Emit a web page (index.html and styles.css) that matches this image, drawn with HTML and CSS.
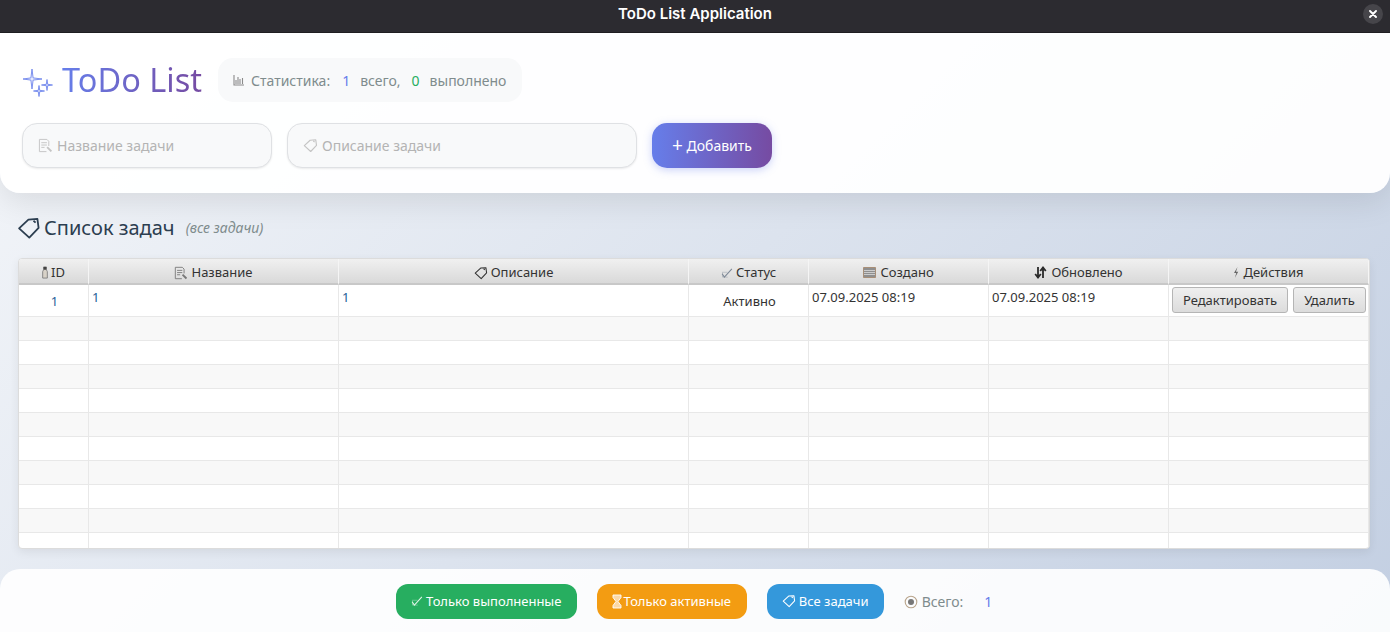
FILE: index.html
```html
<!DOCTYPE html>
<html lang="ru">
<head>
<meta charset="utf-8">
<title>ToDo List Application</title>
<link rel="stylesheet" href="styles.css">
</head>
<body>
<svg class="defs" width="0" height="0" aria-hidden="true">
  <symbol id="i-tag" viewBox="0 0 16 16"><path d="M1.400 8.200 7.600 2.400 13.600 1.900 14.400 7.900 8.200 14.400Z M11 3.200l1.400 1.200" fill="none" stroke="currentColor" stroke-width="1.200" stroke-linejoin="round"/></symbol>
  <symbol id="i-memo" viewBox="0 0 16 16"><path d="M1.500 1.500h8l2 2v5M1.500 1.500v13h7.500M3.500 5h6M3.500 7.500h6M3.500 10h3.500" fill="none" stroke="currentColor" stroke-width="1"/><path d="M9 10.500 10.500 9 15 13.500 13.500 15Z" fill="currentColor"/></symbol>
  <symbol id="i-check" viewBox="0 0 16 16"><path d="M1.500 9 4.500 13.500 14.500 2.500" fill="none" stroke="currentColor" stroke-width="1.400"/><path d="M1.500 7h7M2 7.500V13.500H9" fill="none" stroke="currentColor" stroke-width=".8" opacity=".6"/></symbol>
</svg>
<header class="titlebar">
  <span class="titlebar-text">ToDo List Application</span>
  <button class="close" aria-label="Закрыть"><svg width="8" height="8" viewBox="0 0 8 8"><path d="M1 1l6 6M7 1 1 7" stroke="#fff" stroke-width="1.900" stroke-linecap="round"/></svg></button>
</header>
<section class="top">
  <div class="brand">
    <svg class="sparkle" width="32" height="30" viewBox="0 0 32 30"><path d="M10 1 11.100 9.900 20 11 11.100 12.100 10 21 8.900 12.100 1 11 8.900 9.900Z M25 11.500 25.700 16.300 30.500 17 25.700 17.700 25 22.500 24.300 17.700 19.500 17 24.300 16.300Z M17 17.500 17.700 22.300 22.500 23 17.700 23.700 17 28.500 16.300 23.700 11.500 23 16.300 22.300Z" fill="#e6eafd" stroke="#6f86ec" stroke-width=".9" stroke-linejoin="round"/></svg>
    <h1 class="brand-title">ToDo List</h1>
    <div class="stats">
      <svg class="stat-icon" width="12" height="12" viewBox="0 0 12 12"><path d="M1 1v10h10M3 10V6M5 10V3M7 10V5M9.500 10V4" fill="none" stroke="currentColor" stroke-width="1.100"/></svg>
      <span class="stat-label">Статистика:</span>
      <span class="num-blue">1</span>
      <span>всего,</span>
      <span class="num-green">0</span>
      <span>выполнено</span>
    </div>
  </div>
  <form class="add-form">
    <label class="field field-name"><svg class="ph-icon"><use href="#i-memo"/></svg><input placeholder="Название задачи"></label>
    <label class="field field-desc"><svg class="ph-icon"><use href="#i-tag"/></svg><input placeholder="Описание задачи"></label>
    <button type="button" class="add-btn"><span class="plus">+</span> Добавить</button>
  </form>
</section>
<main class="content">
  <h2 class="list-title"><svg class="list-icon"><use href="#i-tag"/></svg>Список задач<em class="filter-note">(все задачи)</em></h2>
  <div class="table-wrap">
    <table class="tasks">
      <colgroup><col class="c-id"><col class="c-name"><col class="c-desc"><col class="c-status"><col class="c-date"><col class="c-date"><col class="c-act"></colgroup>
      <thead>
        <tr>
          <th><svg class="th-icon narrow" viewBox="0 0 6 14"><path d="M1.500 1h3v3l1 2v7H.5V6l1-2Z" fill="#d8d2c8" stroke="#777" stroke-width=".9"/><path d="M1.500 1h3v3h-3Z" fill="#444"/></svg>ID</th>
          <th><svg class="th-icon wide"><use href="#i-memo"/></svg>Название</th>
          <th><svg class="th-icon wide dark"><use href="#i-tag"/></svg>Описание</th>
          <th><svg class="th-icon check"><use href="#i-check"/></svg>Статус</th>
          <th><svg class="th-icon" viewBox="0 0 13 13"><path d="M.5 1.500h12v10H.5Z" fill="#8f8f8f" stroke="#a88f78"/><path d="M1 4.500h11M1 6.500h11M1 8.500h11" stroke="#dcdcdc" stroke-width=".8"/></svg>Создано</th>
          <th><svg class="th-icon" viewBox="0 0 13 13"><path d="M4 1v10M1.200 8 4 11.500 6.800 8M9 12V2.500M6.200 5 9 1.500 11.800 5" fill="none" stroke="#2b2b2b" stroke-width="1.800"/></svg>Обновлено</th>
          <th><svg class="th-icon bolt" viewBox="0 0 6 13"><path d="M4.500 1 1 7h2.300L1.800 12 5.200 5.800H3Z" fill="#666"/></svg>Действия</th>
        </tr>
      </thead>
      <tbody>
        <tr class="row-first">
          <td class="center mid blue">1</td>
          <td class="blue">1</td>
          <td class="blue">1</td>
          <td class="center mid">Активно</td>
          <td>07.09.2025 08:19</td>
          <td>07.09.2025 08:19</td>
          <td class="actions"><div class="action-row"><button class="act edit">Редактировать</button><button class="act del">Удалить</button></div></td>
        </tr>
        <tr class="alt"><td></td><td></td><td></td><td></td><td></td><td></td><td></td></tr>
        <tr><td></td><td></td><td></td><td></td><td></td><td></td><td></td></tr>
        <tr class="alt"><td></td><td></td><td></td><td></td><td></td><td></td><td></td></tr>
        <tr><td></td><td></td><td></td><td></td><td></td><td></td><td></td></tr>
        <tr class="alt"><td></td><td></td><td></td><td></td><td></td><td></td><td></td></tr>
        <tr><td></td><td></td><td></td><td></td><td></td><td></td><td></td></tr>
        <tr class="alt"><td></td><td></td><td></td><td></td><td></td><td></td><td></td></tr>
        <tr><td></td><td></td><td></td><td></td><td></td><td></td><td></td></tr>
        <tr class="alt"><td></td><td></td><td></td><td></td><td></td><td></td><td></td></tr>
        <tr><td></td><td></td><td></td><td></td><td></td><td></td><td></td></tr>
      </tbody>
    </table>
  </div>
</main>
<footer class="bottom">
  <button class="pill green"><svg class="pill-icon"><use href="#i-check"/></svg>Только выполненные</button>
  <button class="pill orange"><svg class="pill-icon hour" viewBox="0 0 10 15"><path d="M1 1h8v2.500L6 7.500l3 4V14H1v-2.500l3-4L1 3.500Z" fill="#fbd9a8" stroke="#fff" stroke-width=".9"/></svg>Только активные</button>
  <button class="pill blue-pill"><svg class="pill-icon tag"><use href="#i-tag"/></svg>Все задачи</button>
  <div class="total">
    <svg class="total-icon" width="14" height="14" viewBox="0 0 14 14"><circle cx="7" cy="7" r="5.800" fill="none" stroke="#b9a58c" stroke-width="1.100"/><circle cx="7" cy="7" r="3" fill="#777"/></svg>
    <span>Всего:</span>
    <span class="num-blue total-num">1</span>
  </div>
</footer>
</body>
</html>
```
FILE: styles.css
```css
* { box-sizing: border-box; }
html, body { height: 100%; }
body {
  margin: 0;
  width: 1390px;
  height: 632px;
  overflow: hidden;
  display: flex;
  flex-direction: column;
  font-family: "Noto Sans", "Open Sans", sans-serif;
  font-size: 13px;
  color: #2c3e50;
  background: linear-gradient(135deg, #f5f7fa 0%, #c3cfe2 100%);
}
.defs { position: absolute; }
button { font-family: inherit; }

.titlebar {
  position: relative;
  flex: 0 0 33px;
  display: flex;
  align-items: center;
  justify-content: center;
  padding-bottom: 5px;
  background: #2c2b30;
  border-bottom: 1px solid #1f1e22;
}
.titlebar-text {
  font-family: Inter, sans-serif;
  font-weight: 600;
  font-size: 15px;
  color: #fff;
}
.close {
  position: absolute;
  right: 7px;
  top: 4px;
  width: 20px;
  height: 20px;
  padding: 0;
  border: 0;
  border-radius: 50%;
  background: #46454a;
  display: flex;
  align-items: center;
  justify-content: center;
}

.top {
  flex: 0 0 160px;
  padding: 25px 22px 0;
  border-radius: 0 0 20px 20px;
  background: rgba(255, 255, 255, .95);
  box-shadow: 0 8px 32px rgba(0, 0, 0, .1);
}
.brand { display: flex; align-items: center; height: 44px; }
.sparkle { margin-top: 6px; flex: none; }
.brand-title {
  margin: 0 0 0 8px;
  font-size: 32.5px;
  font-weight: 400;
  line-height: 44px;
  background: linear-gradient(90deg, #667eea, #764ba2);
  -webkit-background-clip: text;
  background-clip: text;
  color: transparent;
}
.stats {
  margin-left: 16px;
  width: 304px;
  height: 44px;
  padding: 0 15px;
  display: flex;
  align-items: center;
  border-radius: 15px;
  background: #f8f9fa;
  color: #7f8c8d;
  font-size: 14px;
}
.stat-icon { color: #8a8a8a; margin-right: 6px; flex: none; }
.num-blue { color: #667eea; margin: 0 10px 0 12px; }
.num-green { color: #27ae60; margin: 0 10px 0 11px; }

.add-form { display: flex; gap: 15px; margin-top: 21px; }
.field {
  height: 45px;
  padding: 0 15px;
  display: flex;
  align-items: center;
  border: 1px solid #dfe1e4;
  border-radius: 15px;
  background: #f8f9fa;
  box-shadow: 0 1px 2px rgba(0, 0, 0, .08);
}
.field-name { width: 250px; }
.field-desc { width: 350px; }
.ph-icon { width: 15px; height: 15px; margin-right: 4px; color: #c4c4c4; flex: none; }
.field input {
  flex: 1;
  min-width: 0;
  border: 0;
  padding: 0;
  outline: 0;
  background: transparent;
  font: 14px "Noto Sans", sans-serif;
}
.field input::placeholder { color: #b4b4b4; opacity: 1; }
.add-btn {
  width: 120px;
  height: 45px;
  border: 0;
  border-radius: 15px;
  background: linear-gradient(90deg, #667eea, #764ba2);
  color: #fff;
  font-size: 14px;
  box-shadow: 0 2px 8px rgba(102, 126, 234, .35);
}
.plus { font-size: 19px; line-height: 14px; vertical-align: -1px; }

.content { flex: 1; padding: 0 20px 0 18px; min-height: 0; }
.list-title {
  margin: 21px 0 0;
  height: 28px;
  display: flex;
  align-items: center;
  font-size: 20px;
  font-weight: 400;
  line-height: 28px;
  color: #2c3e50;
}
.list-icon { width: 24px; height: 24px; margin: 0 3px 0 -1px; color: #2c3e50; flex: none; }
.filter-note { margin-left: 11px; font-size: 14px; color: #7f8c8d; }

.table-wrap {
  margin-top: 16px;
  height: 291px;
  overflow: hidden;
  border: 1px solid #dcdcdc;
  border-radius: 4px;
  background: #fff;
  box-shadow: 0 3px 10px rgba(0, 0, 0, .07);
}
.tasks { width: 1350px; table-layout: fixed; border-collapse: separate; border-spacing: 0; }
.c-id { width: 70px; }
.c-name { width: 250px; }
.c-desc { width: 350px; }
.c-status { width: 120px; }
.c-date { width: 180px; }
.c-act { width: 200px; }
.tasks th {
  height: 26px;
  padding: 1px 0 0;
  font-size: 13px;
  font-weight: 400;
  color: #333;
  background: linear-gradient(#f0f0f0, #d9d9d9);
  border-right: 1px solid #f5f5f5;
  border-bottom: 2px solid #c8c8c8;
}
.th-icon {
  width: 13px;
  height: 13px;
  margin-right: 4px;
  vertical-align: -2px;
  color: #777;
}
.th-icon.dark { color: #333; }
.th-icon.narrow { width: 6px; margin-right: 3px; }
.th-icon.wide { width: 14px; height: 14px; margin-right: 3px; vertical-align: -3px; }
.th-icon.check { color: #7d8896; margin-right: 3px; width: 12px; height: 12px; }
.th-icon.bolt { width: 6px; margin-right: 4px; }
.tasks td {
  height: 24px;
  padding: 3px 3px 1px;
  vertical-align: top;
  font-size: 13px;
  line-height: 18px;
  color: #333;
  border-right: 1px solid #e8e8e8;
  border-bottom: 1px solid #e8e8e8;
}
.alt td { background: #f8f8f8; }
.row-first td { height: 32px; }
.tasks td.center { text-align: center; padding: 2px 2px 2px 4px; }
.tasks td.mid { vertical-align: middle; }
.tasks td.blue { color: #1f5f99; }
.tasks td.actions { padding: 2px 3px; }
.action-row { display: flex; gap: 5px; }
.act {
  height: 26px;
  padding: 0;
  border: 1px solid #b5b5b5;
  border-radius: 3px;
  background: linear-gradient(#efefef, #dcdcdc);
  color: #333;
  font-size: 13px;
}
.edit { width: 116px; flex: none; }
.del { width: 73px; flex: none; }

.bottom {
  flex: 0 0 63px;
  display: flex;
  align-items: center;
  justify-content: center;
  gap: 20px;
  padding-top: 2px;
  border-radius: 20px 20px 0 0;
  background: rgba(255, 255, 255, .9);
}
.pill {
  height: 35px;
  padding: 0 0 1px;
  border: 0;
  border-radius: 12px;
  color: #fff;
  font-size: 13px;
  display: flex;
  align-items: center;
  justify-content: center;
}
.green { width: 181px; background: #27ae60; }
.orange { width: 150px; background: #f39c12; }
.blue-pill { width: 117px; background: #3498db; }
.pill-icon { width: 12px; height: 12px; margin-right: 3px; color: #dff5e7; flex: none; }
.pill-icon.hour { width: 10px; height: 15px; margin-right: 1px; }
.pill-icon.tag { width: 14px; height: 14px; color: #fff; }
.total {
  display: flex;
  align-items: center;
  color: #7f8c8d;
  font-size: 14px;
}
.total-icon { margin-right: 4px; }
.total-num { margin: 0 2px 0 21px; }
```
